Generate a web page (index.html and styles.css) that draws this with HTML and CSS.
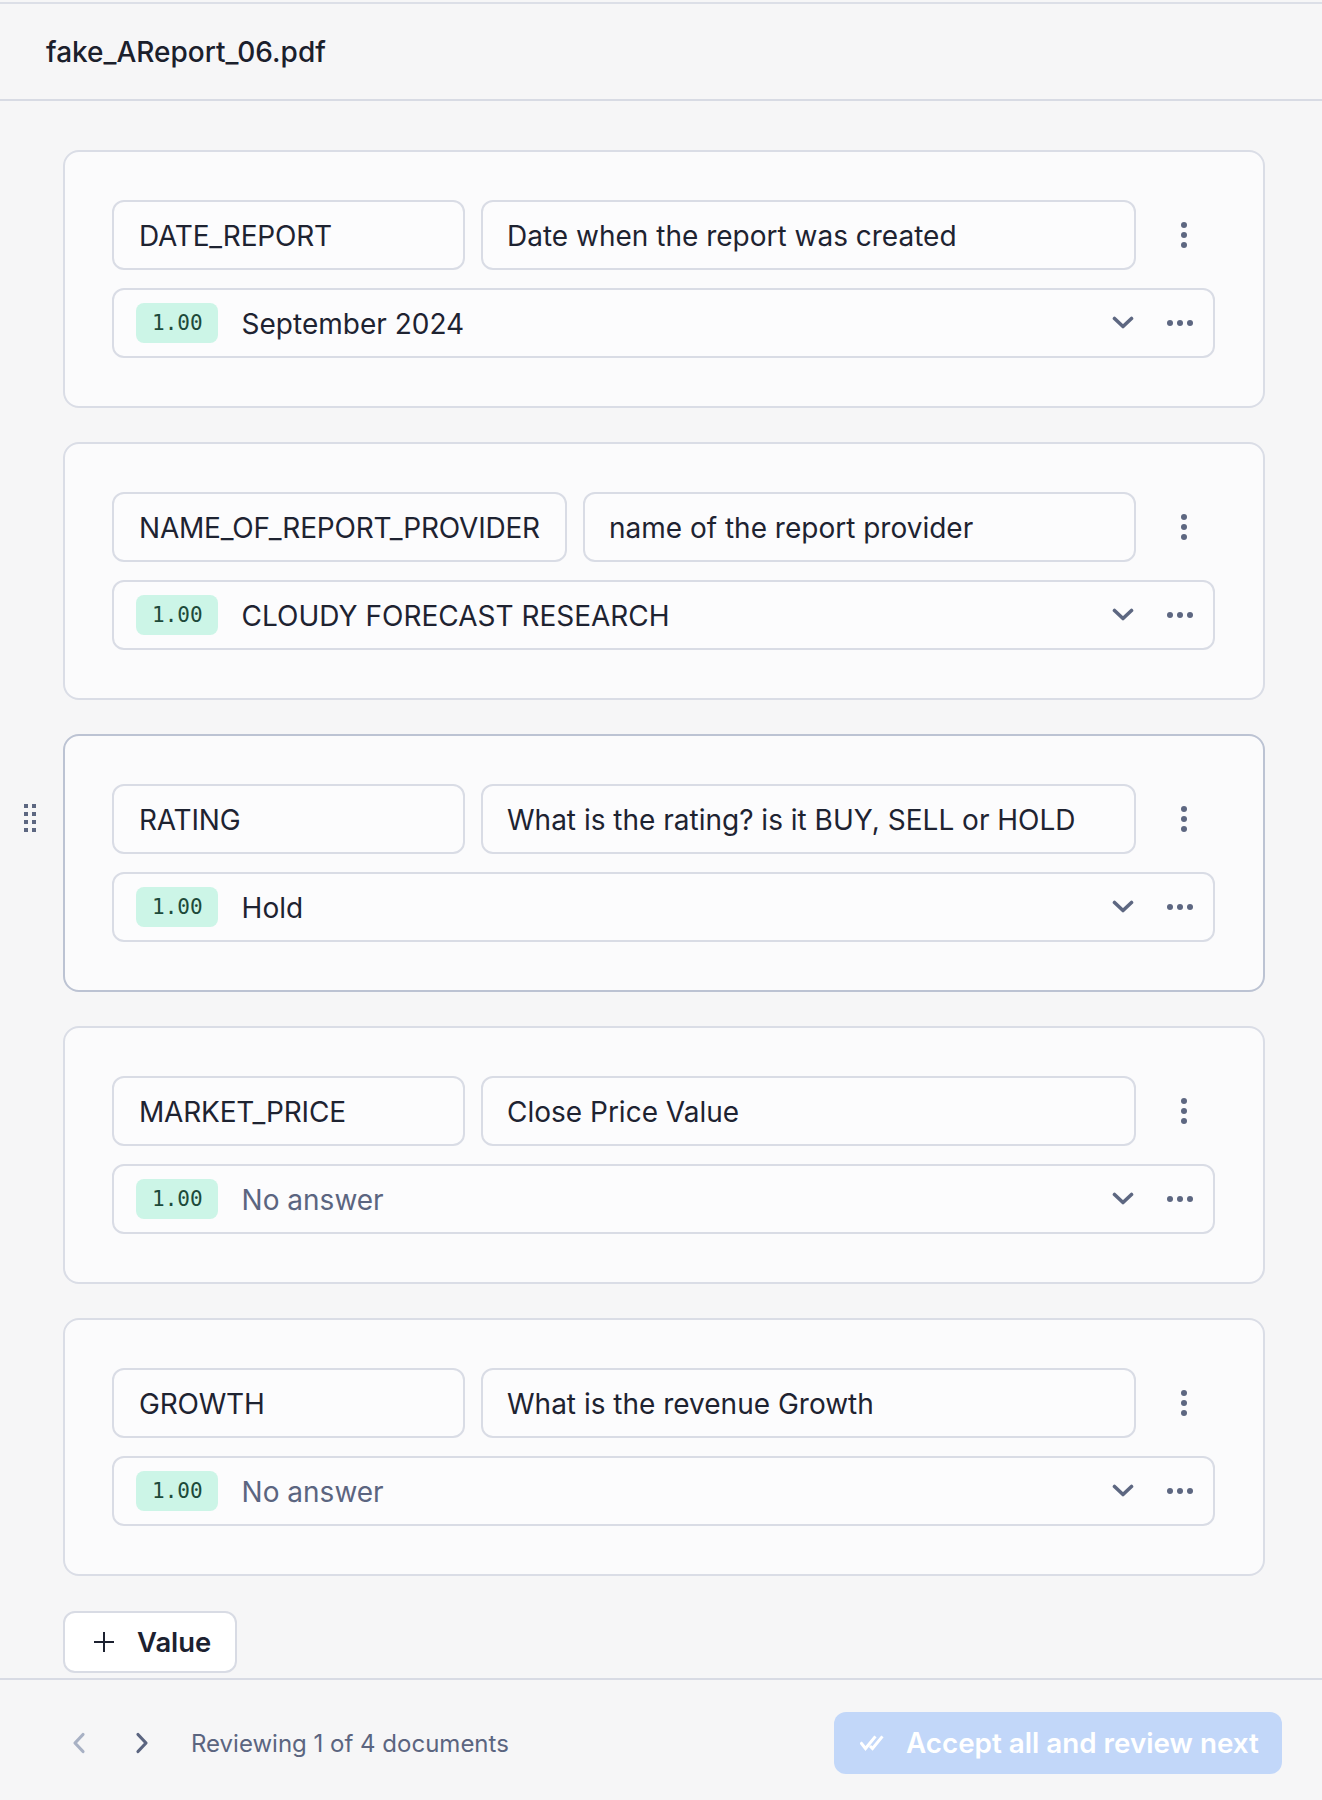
FILE: index.html
```html
<!DOCTYPE html>
<html lang="en">
<head>
<meta charset="utf-8">
<title>fake_AReport_06.pdf</title>
<link rel="stylesheet" href="styles.css">
</head>
<body>
<div class="app">
  <header class="doc-header">
    <h1 class="doc-title">fake_AReport_06.pdf</h1>
  </header>

  <main class="fields">
    <section class="card">
      <div class="field-row">
        <div class="input key">DATE_REPORT</div>
        <div class="input desc">Date when the report was created</div>
        <button class="kebab" aria-label="More">
          <svg width="6" height="26" viewBox="0 0 6 26"><circle cx="3" cy="3" r="3"/><circle cx="3" cy="13" r="3"/><circle cx="3" cy="23" r="3"/></svg>
        </button>
      </div>
      <div class="value-row">
        <span class="badge">1.00</span>
        <span class="value">September 2024</span>
        <button class="icon-btn" aria-label="Expand"><svg width="22" height="14" viewBox="0 0 22 14"><polyline points="2.5,2.5 11,10.5 19.5,2.5"/></svg></button>
        <button class="icon-btn" aria-label="Options"><svg width="26" height="6" viewBox="0 0 26 6"><circle cx="3" cy="3" r="3"/><circle cx="13" cy="3" r="3"/><circle cx="23" cy="3" r="3"/></svg></button>
      </div>
    </section>

    <section class="card">
      <div class="field-row">
        <div class="input key">NAME_OF_REPORT_PROVIDER</div>
        <div class="input desc">name of the report provider</div>
        <button class="kebab" aria-label="More">
          <svg width="6" height="26" viewBox="0 0 6 26"><circle cx="3" cy="3" r="3"/><circle cx="3" cy="13" r="3"/><circle cx="3" cy="23" r="3"/></svg>
        </button>
      </div>
      <div class="value-row">
        <span class="badge">1.00</span>
        <span class="value">CLOUDY FORECAST RESEARCH</span>
        <button class="icon-btn" aria-label="Expand"><svg width="22" height="14" viewBox="0 0 22 14"><polyline points="2.5,2.5 11,10.5 19.5,2.5"/></svg></button>
        <button class="icon-btn" aria-label="Options"><svg width="26" height="6" viewBox="0 0 26 6"><circle cx="3" cy="3" r="3"/><circle cx="13" cy="3" r="3"/><circle cx="23" cy="3" r="3"/></svg></button>
      </div>
    </section>

    <section class="card card-active">
      <span class="drag-handle" aria-hidden="true">
        <svg width="12" height="28" viewBox="0 0 12 28"><rect x="0" y="0" width="4" height="4"/><rect x="8" y="0" width="4" height="4"/><rect x="0" y="8" width="4" height="4"/><rect x="8" y="8" width="4" height="4"/><rect x="0" y="16" width="4" height="4"/><rect x="8" y="16" width="4" height="4"/><rect x="0" y="24" width="4" height="4"/><rect x="8" y="24" width="4" height="4"/></svg>
      </span>
      <div class="field-row">
        <div class="input key">RATING</div>
        <div class="input desc">What is the rating? is it BUY, SELL or HOLD</div>
        <button class="kebab" aria-label="More">
          <svg width="6" height="26" viewBox="0 0 6 26"><circle cx="3" cy="3" r="3"/><circle cx="3" cy="13" r="3"/><circle cx="3" cy="23" r="3"/></svg>
        </button>
      </div>
      <div class="value-row">
        <span class="badge">1.00</span>
        <span class="value">Hold</span>
        <button class="icon-btn" aria-label="Expand"><svg width="22" height="14" viewBox="0 0 22 14"><polyline points="2.5,2.5 11,10.5 19.5,2.5"/></svg></button>
        <button class="icon-btn" aria-label="Options"><svg width="26" height="6" viewBox="0 0 26 6"><circle cx="3" cy="3" r="3"/><circle cx="13" cy="3" r="3"/><circle cx="23" cy="3" r="3"/></svg></button>
      </div>
    </section>

    <section class="card">
      <div class="field-row">
        <div class="input key">MARKET_PRICE</div>
        <div class="input desc">Close Price Value</div>
        <button class="kebab" aria-label="More">
          <svg width="6" height="26" viewBox="0 0 6 26"><circle cx="3" cy="3" r="3"/><circle cx="3" cy="13" r="3"/><circle cx="3" cy="23" r="3"/></svg>
        </button>
      </div>
      <div class="value-row">
        <span class="badge">1.00</span>
        <span class="value empty">No answer</span>
        <button class="icon-btn" aria-label="Expand"><svg width="22" height="14" viewBox="0 0 22 14"><polyline points="2.5,2.5 11,10.5 19.5,2.5"/></svg></button>
        <button class="icon-btn" aria-label="Options"><svg width="26" height="6" viewBox="0 0 26 6"><circle cx="3" cy="3" r="3"/><circle cx="13" cy="3" r="3"/><circle cx="23" cy="3" r="3"/></svg></button>
      </div>
    </section>

    <section class="card">
      <div class="field-row">
        <div class="input key">GROWTH</div>
        <div class="input desc">What is the revenue Growth</div>
        <button class="kebab" aria-label="More">
          <svg width="6" height="26" viewBox="0 0 6 26"><circle cx="3" cy="3" r="3"/><circle cx="3" cy="13" r="3"/><circle cx="3" cy="23" r="3"/></svg>
        </button>
      </div>
      <div class="value-row">
        <span class="badge">1.00</span>
        <span class="value empty">No answer</span>
        <button class="icon-btn" aria-label="Expand"><svg width="22" height="14" viewBox="0 0 22 14"><polyline points="2.5,2.5 11,10.5 19.5,2.5"/></svg></button>
        <button class="icon-btn" aria-label="Options"><svg width="26" height="6" viewBox="0 0 26 6"><circle cx="3" cy="3" r="3"/><circle cx="13" cy="3" r="3"/><circle cx="23" cy="3" r="3"/></svg></button>
      </div>
    </section>

    <div class="add-row">
      <button class="add-btn">
        <svg width="22" height="22" viewBox="0 0 22 22"><path d="M11 1v20M1 11h20"/></svg>
        <span>Value</span>
      </button>
    </div>
  </main>

  <footer class="review-bar">
    <div class="pager">
      <button class="nav-btn disabled" aria-label="Previous"><svg width="14" height="22" viewBox="0 0 14 22"><polyline points="11,2.5 3,11 11,19.5"/></svg></button>
      <button class="nav-btn" aria-label="Next"><svg width="14" height="22" viewBox="0 0 14 22"><polyline points="3,2.5 11,11 3,19.5"/></svg></button>
      <span class="review-text">Reviewing 1 of 4 documents</span>
    </div>
    <button class="accept-btn">
      <svg width="29" height="16" viewBox="0 0 29 16"><polyline points="1.5,8.5 5.5,13.5 14.5,2.5"/><polyline points="11,12 12.5,13.5 21.5,2.5"/></svg>
      <span>Accept all and review next</span>
    </button>
  </footer>
</div>
</body>
</html>
```

FILE: styles.css
```css
* {
  box-sizing: border-box;
}

html, body {
  margin: 0;
  padding: 0;
}

body {
  background: #f6f6f7;
  font-family: Inter, "Noto Sans", "Liberation Sans", sans-serif;
  color: #1e2331;
}

button {
  font-family: inherit;
  border: none;
  background: none;
  padding: 0;
  margin: 0;
  cursor: pointer;
}

.app {
  height: 1800px;
  display: flex;
  flex-direction: column;
}

.doc-header {
  margin-top: 2px;
  height: 99px;
  border-top: 2px solid #dcdfe7;
  border-bottom: 2px solid #d8dbe4;
  display: flex;
  align-items: center;
  padding: 0 46px;
}

.doc-title {
  margin: 0;
  font-size: 28px;
  font-weight: 500;
  color: #1b202c;
}

.fields {
  flex: 1;
  padding: 49px 57px 0 63px;
  display: flex;
  flex-direction: column;
  gap: 34px;
}

.card {
  position: relative;
  background: #fbfbfc;
  border: 2px solid #dadde6;
  border-radius: 16px;
  padding: 48px 48px 48px 47px;
  display: flex;
  flex-direction: column;
  gap: 18px;
}

.card-active {
  border-color: #bcc3d3;
}

.drag-handle {
  position: absolute;
  left: -41px;
  top: 68px;
  display: block;
  width: 12px;
  height: 28px;
  fill: #5d6781;
}

.drag-handle svg {
  display: block;
}

.field-row {
  display: flex;
  gap: 16px;
  align-items: center;
}

.input {
  height: 70px;
  background: #fcfcfd;
  border: 2px solid #d9dce5;
  border-radius: 12px;
  display: flex;
  align-items: center;
  padding-top: 2px;
  font-size: 28px;
  color: #1e2331;
  white-space: nowrap;
}

.key {
  flex: none;
  min-width: 353px;
  padding-left: 25px;
  padding-right: 25px;
  letter-spacing: -0.2px;
}

.desc {
  flex: 1;
  padding-left: 24px;
  padding-right: 24px;
}

.kebab {
  flex: none;
  width: 63px;
  height: 70px;
  display: flex;
  align-items: center;
  justify-content: center;
  fill: #5d6781;
}

.kebab svg {
  display: block;
}

.value-row {
  height: 70px;
  background: #fcfcfd;
  border: 2px solid #d9dce5;
  border-radius: 12px;
  display: flex;
  align-items: center;
  padding: 0 13px 0 22px;
}

.badge {
  flex: none;
  height: 40px;
  padding: 0 15px 0 16px;
  border-radius: 8px;
  background: #ccf5e7;
  color: #1d4a3a;
  font-family: "DejaVu Sans Mono", "Liberation Mono", monospace;
  font-size: 21px;
  display: flex;
  align-items: center;
}

.value {
  flex: 1;
  margin-left: 24px;
  padding-top: 2px;
  font-size: 28px;
  color: #1e2331;
}

.value.empty {
  color: #5b6580;
}

.icon-btn {
  flex: none;
  width: 40px;
  height: 40px;
  display: flex;
  align-items: center;
  justify-content: center;
  fill: #5d6781;
}

.icon-btn + .icon-btn {
  margin-left: 17px;
}

.icon-btn svg {
  display: block;
}

.icon-btn polyline {
  fill: none;
  stroke: #5d6781;
  stroke-width: 3.6;
  stroke-linecap: round;
  stroke-linejoin: round;
}

.add-row {
  margin-top: 1px;
  display: flex;
}

.add-btn {
  height: 62px;
  background: #ffffff;
  border: 2px solid #d8dbe4;
  border-radius: 12px;
  display: flex;
  align-items: center;
  gap: 22px;
  padding: 0 24px 0 28px;
  font-size: 27.4px;
  font-weight: 600;
  color: #1c2130;
}

.add-btn svg {
  display: block;
}

.add-btn path {
  stroke: #1c2130;
  stroke-width: 2;
  fill: none;
}

.review-bar {
  flex: none;
  height: 122px;
  border-top: 2px solid #d8dbe4;
  padding: 32px 40px 0 72px;
  display: flex;
  justify-content: space-between;
  align-items: flex-start;
}

.pager {
  height: 62px;
  display: flex;
  align-items: center;
}

.nav-btn {
  width: 14px;
  height: 22px;
  display: flex;
  align-items: center;
  justify-content: center;
}

.nav-btn + .nav-btn {
  margin-left: 49px;
}

.nav-btn svg {
  display: block;
}

.nav-btn polyline {
  fill: none;
  stroke: #5b6580;
  stroke-width: 3.2;
  stroke-linecap: round;
  stroke-linejoin: round;
}

.nav-btn.disabled polyline {
  stroke: #a8b1c4;
}

.review-text {
  margin-left: 42px;
  font-size: 24px;
  color: #5b6580;
}

.accept-btn {
  height: 62px;
  width: 448px;
  background: #c2d7f9;
  border-radius: 12px;
  display: flex;
  align-items: center;
  gap: 17px;
  padding: 0 18px 0 26px;
  color: #ffffff;
  font-size: 27.8px;
  font-weight: 600;
  white-space: nowrap;
}

.accept-btn svg {
  display: block;
  flex: none;
}

.accept-btn polyline {
  fill: none;
  stroke: #ffffff;
  stroke-width: 3;
  stroke-linecap: square;
  stroke-linejoin: miter;
}
```
